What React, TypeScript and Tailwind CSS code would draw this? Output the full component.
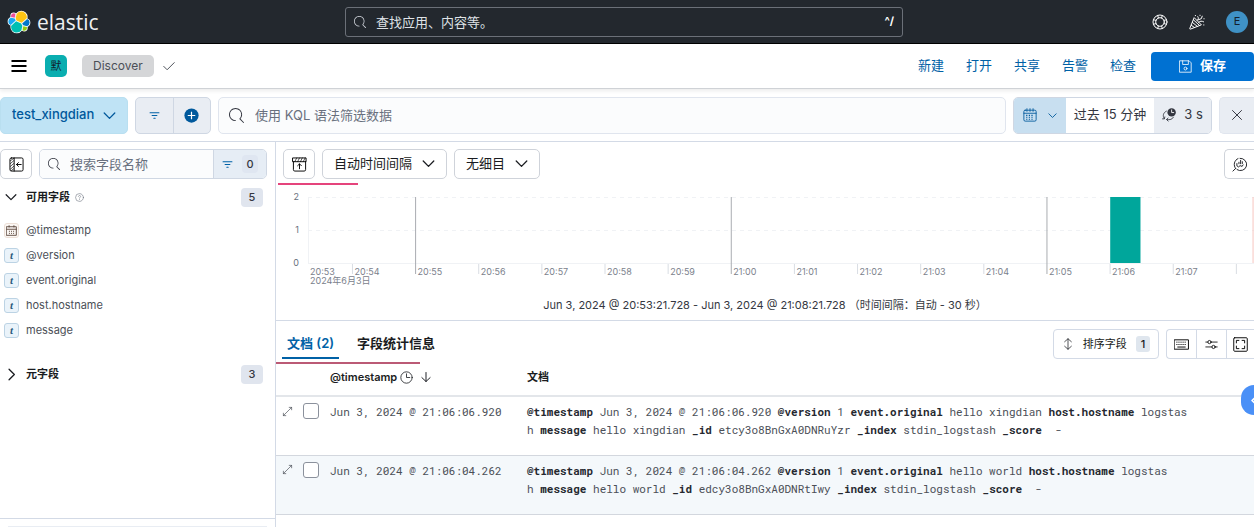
import { useState } from "react";
import type { ReactNode } from "react";

const FONT = "font-['Inter','Noto_Sans_CJK_SC',sans-serif]";

type IconProps = { className?: string; children?: ReactNode };

function Icon({ className = "size-4", children }: IconProps) {
  return (
    <svg
      viewBox="0 0 16 16"
      className={`shrink-0 ${className}`}
      fill="none"
      stroke="currentColor"
      strokeWidth={1}
      strokeLinecap="round"
      strokeLinejoin="round"
      aria-hidden="true"
    >
      {children}
    </svg>
  );
}

function SearchIcon({ className }: IconProps) {
  return (
    <Icon className={className}>
      <path
        fill="currentColor"
        stroke="none"
        d="M11.271 11.978l3.872 3.873a.502.502 0 0 0 .708 0 .502.502 0 0 0 0-.708l-3.565-3.564c2.38-2.747 2.267-6.923-.342-9.532-2.73-2.73-7.17-2.73-9.898 0-2.728 2.729-2.728 7.17 0 9.9a6.955 6.955 0 0 0 4.949 2.05.5.5 0 0 0 0-1 5.96 5.96 0 0 1-4.242-1.757 6.01 6.01 0 0 1 0-8.486 6.004 6.004 0 0 1 8.484 0 6.01 6.01 0 0 1 0 8.486.5.5 0 0 0 .034.738Z"
      />
    </Icon>
  );
}

function ChevronDown({ className }: IconProps) {
  return <Icon className={className}><path strokeWidth={1.6} d="M1.5 5L8 11.5 14.5 5" /></Icon>;
}

function FilterIcon({ className }: IconProps) {
  return <Icon className={className}><path strokeWidth={1.5} d="M1.5 4h13M4.5 8h7M7 12h2" /></Icon>;
}

function CalendarIcon({ className }: IconProps) {
  return (
    <Icon className={className}>
      <rect x="1" y="2.5" width="14" height="12.5" rx="1.5" />
      <path d="M1 6h14M4.5 0.8v3M8 0.8v3M11.5 0.8v3" />
      <path strokeDasharray="1.4 1.6" strokeLinecap="butt" strokeWidth={1.2} d="M3.6 8.4h9M3.6 10.6h9M3.6 12.8h9" />
    </Icon>
  );
}

function ElasticMark() {
  const parts = [
    ["#FEC514", "M12.58 13.787l7.002 3.211 7.066-6.213a7.849 7.849 0 0 0 .152-1.557c0-4.287-3.464-7.762-7.738-7.762a7.714 7.714 0 0 0-6.38 3.37l-1.176 6.126 1.074 2.825Z"],
    ["#00BFB3", "M5.333 21.228A8 8 0 0 0 5.18 22.805c0 4.299 3.484 7.796 7.767 7.796a7.761 7.761 0 0 0 6.418-3.406l1.166-6.104-1.556-2.99-7.03-3.216-6.612 6.343Z"],
    ["#F04E98", "M5.288 9.067l4.8 1.137 1.051-5.477a3.76 3.76 0 0 0-2.286-.77c-2.09 0-3.79 1.706-3.79 3.804 0 .447.078.892.225 1.306Z"],
    ["#1BA9F5", "M4.872 10.214a5.294 5.294 0 0 0-3.484 4.993c0 2.15 1.325 4.075 3.316 4.843l6.735-6.113-1.237-2.653-5.33-1.07Z"],
    ["#93C90E", "M20.873 27.187c.652.5 1.457.782 2.278.782 2.09 0 3.79-1.706 3.79-3.804 0-.46-.08-.906-.228-1.317l-4.796-1.126-1.044 5.465Z"],
    ["#0077CC", "M21.848 20.563l5.28 1.24a5.304 5.304 0 0 0 3.484-4.997 5.289 5.289 0 0 0-3.324-4.843l-6.905 6.071 1.465 2.529Z"],
  ];
  return (
    <svg viewBox="-0.5 -0.5 33 33" className="size-6 shrink-0" aria-hidden="true">
      {parts.map(([fill, d]) => (
        <path key={fill} d={d} fill="#fff" stroke="#fff" strokeWidth={2} />
      ))}
      {parts.map(([fill, d]) => <path key={fill} d={d} fill={fill} />)}
    </svg>
  );
}

function Header() {
  return (
    <header className="grid h-11 grid-cols-[345px_1fr_351px] items-center border-b border-black bg-[#23282e] text-white">
      <a href="#" className="flex items-center gap-[6px] pl-[7px]">
        <ElasticMark />
        <span className="font-['Open_Sans',sans-serif] text-[21px] leading-6 text-[#eef0f2]">elastic</span>
      </a>
      <div className="flex h-[30px] items-center gap-[10px] rounded-[3px] border border-[#6b7078] px-2">
        <label htmlFor="global-search">
          <SearchIcon className="size-3 text-gray-300" />
        </label>
        <input
          id="global-search"
          type="search"
          aria-label="搜索"
          placeholder="查找应用、内容等。"
          className="h-6 min-w-0 flex-1 bg-transparent text-[13px] leading-6 text-gray-100 outline-none placeholder:text-[#dfe2e6]"
        />
        <kbd className="font-['Inter',sans-serif] text-[11px] font-bold">^/</kbd>
      </div>
      <div className="flex items-center justify-end gap-[21px] pr-[6px]">
        <button type="button" aria-label="帮助">
          <Icon className="size-4">
            <circle cx="8" cy="8" r="7" />
            <circle cx="8" cy="8" r="4.3" />
            <path d="M5.7 1.5l.7 2.6M10.3 1.5l-.7 2.6M5.7 14.5l.7-2.6M10.3 14.5l-.7-2.6M1.5 5.7l2.6.7M1.5 10.3l2.6-.7M14.5 5.7l-2.6.7M14.5 10.3l-2.6-.7" />
          </Icon>
        </button>
        <button type="button" aria-label="新闻">
          <Icon className="size-4">
            <path d="M5 4L0.8 14.4c-.2.6.2.9.7.7L12 11zM3.4 8.4l5 4M4.4 5.8l6 5.6M2.2 11.2l3.4 2.4M8 6.6c1.6-1 1.8-2.6.8-4M9.6 8.4c1.6-1.6 3-1.6 5-.6M9.4 5.8l3-1.2.8-2.4M11 1.2v.3M15 4.6v.3M6.4 1.4v.3M14.8 10.8v.3" />
          </Icon>
        </button>
        <button type="button" className="size-[22px] rounded-full bg-[#3f91c5] text-[11px] text-[#12202c]">E</button>
      </div>
    </header>
  );
}

function NavBar() {
  return (
    <nav className="relative z-10 flex h-[45px] items-center border-b border-[#cfd2d6] bg-white shadow-[0_2px_4px_rgba(0,0,0,0.08)]">
      <button type="button" aria-label="菜单" className="ml-[11px] mr-[18px]">
        <Icon className="size-4 text-black"><path strokeLinecap="butt" strokeWidth={1.8} d="M0.5 3h15M0.5 8h15M0.5 13h15" /></Icon>
      </button>
      <button type="button" className="size-[22px] rounded-[5px] bg-[#0aaeb0] text-[11px] text-[#12202c]">默</button>
      <a href="#" className="ml-[15px] flex h-[22px] items-center rounded-[5px] bg-[#d5d6d8] px-[11px] text-[12px] text-[#4b4f57]">Discover</a>
      <Icon className="ml-[9px] size-3 text-[#4b4f57]"><path strokeWidth={1.3} d="M1 8.5l4.5 4.5L15 3.5" /></Icon>
      <div className="ml-auto flex items-center gap-[22px] text-[13px] text-[#0061a6]">
        {["新建", "打开", "共享", "告警", "检查"].map((label) => (
          <button key={label} type="button">{label}</button>
        ))}
      </div>
      <button
        type="button"
        className="ml-[15px] flex h-[29px] w-[103px] items-center justify-center gap-2 rounded bg-[#0071d2] text-[13px] font-semibold text-white"
      >
        <Icon className="size-[13px]">
          <path d="M1 1h11.5L15 3.5V15H1zM4.5 1v4.5h7V1" />
          <circle cx="8" cy="10.5" r="1.8" />
        </Icon>
        保存
      </button>
    </nav>
  );
}

function QueryBar() {
  return (
    <div className="flex h-[53px] items-center gap-[7px] border-b border-[#d3dae6]">
      <div className="relative h-[37px] w-32 text-[#00599c]">
        <select
          aria-label="数据视图"
          className="h-full w-full appearance-none rounded-[5px] border border-[#b9dff0] bg-[#bfe3f5] pl-[11px] text-[13px] font-medium"
        >
          <option>test_xingdian</option>
        </select>
        <ChevronDown className="pointer-events-none absolute right-3 top-3 size-[13px]" />
      </div>
      <div className="flex h-[37px] w-[76px] divide-x divide-[#cfd7e3] overflow-hidden rounded-[5px] border border-[#cfd7e3] bg-[#e9edf3] text-[#0061a6]">
        <button type="button" aria-label="筛选" className="flex flex-1 items-center justify-center">
          <FilterIcon className="size-[11px]" />
        </button>
        <button type="button" aria-label="添加筛选" className="flex flex-1 items-center justify-center">
          <svg viewBox="0 0 16 16" className="size-[15px]" aria-hidden="true">
            <circle cx="8" cy="8" r="7.6" fill="#00599c" />
            <path d="M8 4v8M4 8h8" stroke="#fff" strokeWidth={1.3} />
          </svg>
        </button>
      </div>
      <div className="flex h-[37px] min-w-0 flex-1 items-center gap-[11px] rounded-[5px] border border-[#e0e5ee] bg-[#fbfcfd] px-[10px]">
        <label htmlFor="kql">
          <SearchIcon className="size-[15px] text-[#343741]" />
        </label>
        <input
          id="kql"
          type="search"
          aria-label="查询"
          placeholder="使用 KQL 语法筛选数据"
          className="h-6 min-w-0 flex-1 bg-transparent text-[13px] leading-6 outline-none placeholder:text-[#69707d]"
        />
      </div>
      <div className="flex h-[37px] w-[199px] overflow-hidden rounded-[5px] border border-[#cfd7e3] text-[13px] text-[#343741]">
        <button type="button" aria-label="日期" className="flex w-[52px] items-center justify-center gap-[11px] bg-[#c8dff0] text-[#00599c]">
          <CalendarIcon className="size-[14px]" />
          <ChevronDown className="size-[9px]" />
        </button>
        <button type="button" className="flex-1 whitespace-nowrap bg-white">过去 15 分钟</button>
        <button type="button" className="flex w-[57px] items-center justify-center gap-2 bg-[#e9edf3]">
          <Icon className="size-[14px]">
            <circle cx="11" cy="5" r="4.8" fill="currentColor" stroke="none" />
            <path stroke="#fff" d="M11 2.2V5.2h2.4" />
            <path d="M5 3.6C1.4 5.2.4 9 2.6 12.2M.6 12.4h2.2l.4-2.2M5.4 13.2c3.6.8 6.6-.4 7.6-2.6M7 11.4l-1.8 1.8L7 15" />
          </Icon>
          3 s
        </button>
      </div>
      <button type="button" aria-label="关闭" className="flex h-[37px] w-[35px] items-center justify-center rounded-l-[5px] border border-r-0 border-[#e0e5ee] bg-[#e9edf3]">
        <Icon className="size-3 text-[#343741]"><path strokeWidth={1.3} d="M2 2l12 12M14 2L2 14" /></Icon>
      </button>
    </div>
  );
}

function CountBadge({ children }: IconProps) {
  return (
    <span className="ml-auto flex h-[19px] w-[22px] items-center justify-center rounded bg-[#e0e5ee] text-[11px] font-medium text-[#343741]">
      {children}
    </span>
  );
}

const fields = ["@timestamp", "@version", "event.original", "host.hostname", "message"];

function Sidebar() {
  return (
    <aside className="flex w-[276px] shrink-0 flex-col border-r border-[#d3dae6]">
      <div className="flex gap-[7px] pr-2 pt-[7px]">
        <button type="button" aria-label="隐藏边栏" className="flex h-[30px] w-8 items-center justify-center rounded-[5px] border border-[#cfd3da]">
          <Icon className="size-[15px] text-black">
            <rect x="1" y="1" width="14" height="14" rx="1.5" />
            <path d="M5.5 1v14M13 8H8M10 6L8 8l2 2" />
            <path strokeWidth={0.7} d="M1.5 4l3.5-2.5M1.5 7l3.5-3M1.5 10l3.5-3M1.5 13l3.5-3M2.5 14.5l2.5-2" />
          </Icon>
        </button>
        <div className="flex h-[30px] min-w-0 flex-1 overflow-hidden rounded-[5px] border border-[#cfd7e3]">
          <div className="flex min-w-0 flex-1 items-center gap-[10px] bg-[#fbfcfd] pl-2">
            <label htmlFor="field-search">
              <SearchIcon className="size-3 text-[#343741]" />
            </label>
            <input
              id="field-search"
              type="search"
              aria-label="搜索字段"
              placeholder="搜索字段名称"
              className="h-6 w-full min-w-0 bg-transparent text-[13px] leading-6 outline-none placeholder:text-[#69707d]"
            />
          </div>
          <button type="button" className="flex w-[53px] items-center justify-center gap-[9px] border-l border-[#cfd7e3] bg-[#e6edf5] text-[11px] font-medium text-[#343741]">
            <FilterIcon className="size-[11px] text-[#0061a6]" />
            <span className="rounded bg-[#dfe6f1] px-1 py-px">0</span>
          </button>
        </div>
      </div>

      <div className="mt-2 flex h-5 items-center pl-[5px] pr-3">
        <ChevronDown className="size-3 text-[#1a1c21]" />
        <h2 className="ml-[9px] text-[11px] font-semibold text-[#1a1c21]">可用字段</h2>
        <Icon className="ml-[5px] size-[9px] text-[#69707d]">
          <circle cx="8" cy="8" r="7" />
          <path d="M6 6.2c0-2.6 4-2.6 4 0 0 1.4-2 1.4-2 3M8 11.6v.3" />
        </Icon>
        <CountBadge>5</CountBadge>
      </div>

      <ul className="mt-[11px] text-[11px] text-[#4b4f57]">
        {fields.map((field) => (
          <li key={field} className="flex h-[25px] items-center gap-[7px] pl-1">
            {field === "@timestamp" ? (
              <span className="flex size-[15px] items-center justify-center rounded-[3px] border border-[#ecdfd6] bg-[#fbf7f4]">
                <Icon className="size-[11px] text-[#5a463c]">
                  <path strokeWidth={1.3} d="M1 2.5h14V15H1zM1 6.2h14M4.5 1v2M11.5 1v2M5 9v.4M8 9v.4M11 9v.4M5 12v.4M8 12v.4M11 12v.4" />
                </Icon>
              </span>
            ) : (
              <span className="flex size-[15px] items-center justify-center rounded-[3px] border border-[#bcd3e4] bg-[#eaf3fa] font-['Liberation_Serif',serif] text-[11px] font-bold italic leading-none text-[#2c5a7d]">t</span>
            )}
            {field}
          </li>
        ))}
      </ul>

      <div className="mt-[21px] flex h-5 items-center pl-[5px] pr-3">
        <Icon className="size-[13px] text-[#1a1c21]"><path strokeWidth={1.6} d="M5 1.5L11.5 8 5 14.5" /></Icon>
        <h2 className="ml-2 text-[11px] font-semibold text-[#1a1c21]">元字段</h2>
        <CountBadge>3</CountBadge>
      </div>

      <div className="mt-auto h-[9px] border-t border-[#d3dae6] px-2 pt-[7px]">
        <div className="border-t border-[#e9edf3]" />
      </div>
    </aside>
  );
}

// position of each minute tick, as a share of the plot width
const FIRST_TICK = 4.7;
const TICK_STEP = 6.674;
const ticks = ["20:54", "20:55", "20:56", "20:57", "20:58", "20:59", "21:00", "21:01", "21:02", "21:03", "21:04", "21:05", "21:06", "21:07", ""];

function Histogram() {
  return (
    <div className="mt-3 flex">
      <div className="flex h-[77px] w-8 flex-col justify-between pr-[9px] text-right text-[9px] leading-[11px] text-[#69707d]">
        <span>2</span>
        <span>1</span>
        <span>0</span>
      </div>
      <svg className="mt-[6px] h-[92px] min-w-0 flex-1" role="img" aria-label="直方图">
        <g stroke="#f0f2f5">
          <path d="M0.5 0V67" />
          <line x1="0" x2="100%" y1="0.5" y2="0.5" strokeDasharray="4 4" />
          <line x1="0" x2="100%" y1="33.5" y2="33.5" strokeDasharray="4 4" />
          <line x1="0" x2="100%" y1="66.5" y2="66.5" />
        </g>
        <rect x="84.8%" y="0" width="3.2%" height="66" fill="#00a69b" />
        <line x1="99.9%" x2="99.9%" y1="0" y2="66" stroke="#f7c5bf" />
        <g fontSize="9" fill="#7b818c">
          <text x="2" y="78">20:53</text>
          <text x="2" y="87">2024年6月3日</text>
        </g>
        {ticks.map((label, i) => {
          const major = /[05]$/.test(label);
          return (
            <svg key={i} x={`${FIRST_TICK + i * TICK_STEP}%`} overflow="visible">
              <line x1="0" x2="0" y1={major ? 0 : 67} y2="77" stroke={major ? "#a9acb1" : "#d9dde3"} />
              <text x="2" y="78" fontSize="9" fill="#7b818c">{label}</text>
            </svg>
          );
        })}
      </svg>
    </div>
  );
}

function ChartPanel() {
  return (
    <section className="relative h-[179px] border-b border-[#d3dae6] pt-[7px]">
      <div className="flex gap-[7px] pl-[7px] text-[13px] text-[#1a1c21]">
        <button type="button" aria-label="隐藏图表" className="flex h-[30px] w-8 items-center justify-center rounded-[5px] border border-[#cfd3da]">
          <Icon className="size-[15px] text-black">
            <path d="M1 1h14v4H1zM1.5 5v8.5A1.5 1.5 0 0 0 3 15h10a1.5 1.5 0 0 0 1.5-1.5V5M8 12.5v-5M6 9.3l2-2 2 2" />
            <path strokeWidth={0.7} d="M3 5l2-4M6 5l2-4M9 5l2-4M12 5l2-4" />
          </Icon>
        </button>
        <div className="relative h-[30px] w-[125px]">
          <select aria-label="时间间隔" className="h-full w-full appearance-none rounded-[5px] border border-[#cfd3da] pl-[11px]">
            <option>自动时间间隔</option>
          </select>
          <ChevronDown className="pointer-events-none absolute right-3 top-2 size-[13px]" />
        </div>
        <div className="relative h-[30px] w-[86px]">
          <select aria-label="细目" className="h-full w-full appearance-none rounded-[5px] border border-[#cfd3da] pl-[11px]">
            <option>无细目</option>
          </select>
          <ChevronDown className="pointer-events-none absolute right-3 top-2 size-[13px]" />
        </div>
        <button type="button" aria-label="编辑可视化" className="ml-auto flex h-[30px] w-[30px] items-center justify-center rounded-l-[5px] border border-r-0 border-[#cfd3da]">
          <Icon className="size-[15px] text-[#1a1c21]">
            <path d="M3.9 12.2A6.6 6.6 0 0 1 6.4 1.7M8.6 1.4a6.6 6.6 0 1 1-3.2 12.1M1 15l2.9-2.8M5.2 7v2.4l1.8 1.2 1.6-1.4 2.2.8 1-1.6M7.4 7.2V5.6M9.2 7.2V3.6M11 7V5" />
          </Icon>
        </button>
      </div>
      <div className="absolute left-[2px] top-[41px] h-[2px] w-20 bg-[#e5447c]" />
      <Histogram />
      <p className="mt-2 text-center text-[11px] leading-4 text-[#343741]">
        Jun 3, 2024 @ 20:53:21.728 - Jun 3, 2024 @ 21:08:21.728 （时间间隔：自动 - 30 秒）
      </p>
    </section>
  );
}

type Pair = [string, string];
type Doc = { time: string; lines: Pair[][] };

const docs: Doc[] = [
  {
    time: "Jun 3, 2024 @ 21:06:06.920",
    lines: [
      [["@timestamp", "Jun 3, 2024 @ 21:06:06.920 "], ["@version", "1 "], ["event.original", "hello xingdian "], ["host.hostname", "logstas"]],
      [["", "h "], ["message", "hello xingdian "], ["_id", "etcy3o8BnGxA0DNRuYzr "], ["_index", "stdin_logstash "], ["_score", " -"]],
    ],
  },
  {
    time: "Jun 3, 2024 @ 21:06:04.262",
    lines: [
      [["@timestamp", "Jun 3, 2024 @ 21:06:04.262 "], ["@version", "1 "], ["event.original", "hello world "], ["host.hostname", "logstas"]],
      [["", "h "], ["message", "hello world "], ["_id", "edcy3o8BnGxA0DNRtIwy "], ["_index", "stdin_logstash "], ["_score", " -"]],
    ],
  },
];

function DocTable() {
  const [selected, setSelected] = useState<string[]>([]);

  function toggle(time: string) {
    setSelected((prev) => (prev.includes(time) ? prev.filter((t) => t !== time) : [...prev, time]));
  }

  return (
    <table className="w-full table-fixed border-collapse text-left text-[11px]">
      <thead>
        <tr className="h-[30px] border-b-2 border-[#e3e6ea] align-top text-[#1a1c21]">
          <th className="w-[54px]" aria-label="操作" />
          <th className="w-[197px] p-0 pt-[3px] font-semibold">
            <span className="flex items-center gap-[3px]">
              @timestamp
              <Icon className="size-[13px]"><circle cx="8" cy="8" r="7" /><path d="M8 3.5V8h4" /></Icon>
              <Icon className="ml-1 size-3"><path strokeWidth={1.3} d="M8 2v12M2.5 8.8L8 14l5.5-5.2" /></Icon>
            </span>
          </th>
          <th className="p-0 pt-[3px] font-semibold">文档</th>
        </tr>
      </thead>
      <tbody className="font-['Roboto_Mono','Liberation_Mono',monospace] leading-[18px] text-[#4b4f57]">
        {docs.map((doc) => (
          <tr key={doc.time} className="h-[59px] border-b border-[#d3d7de] align-top even:bg-[#f4f8fb]">
            <td className="p-0 pt-[6px]">
              <div className="flex items-center gap-[10px] pl-[6px]">
                <button type="button" aria-label="展开">
                  <Icon className="size-[11px]"><path d="M2 14L14 2M10.5 2H14v3.5M5.5 14H2v-3.5" /></Icon>
                </button>
                <input
                  type="checkbox"
                  aria-label={`选择 ${doc.time}`}
                  checked={selected.includes(doc.time)}
                  onChange={() => toggle(doc.time)}
                  className="size-4 appearance-none rounded-[3px] border border-[#8b919c] bg-white checked:bg-[#0071d2]"
                />
              </div>
            </td>
            <td className="p-0 pt-[6px]">{doc.time}</td>
            <td className="p-0 pt-[6px]">
              {doc.lines.map((line, i) => (
                <div key={i} className="whitespace-pre">
                  {line.map(([name, value]) => (
                    <span key={name}>
                      {name && <b className="font-bold text-[#25282f]">{name} </b>}
                      {value}
                    </span>
                  ))}
                </div>
              ))}
            </td>
          </tr>
        ))}
      </tbody>
    </table>
  );
}

function DocsPanel() {
  return (
    <section className="relative">
      <div className="flex h-[45px] items-start pl-[6px] pt-2">
        <div role="tablist" className="flex h-[30px] gap-[13px] text-[13px] font-semibold">
          <button type="button" role="tab" aria-selected="true" className="border-b-2 border-[#0061a6] px-[5px] pt-px text-[#0061a6]">文档 (2)</button>
          <button type="button" role="tab" aria-selected="false" className="border-b-2 border-transparent px-[5px] pt-px text-[#1a1c21]">字段统计信息</button>
        </div>
        <button type="button" className="ml-auto flex h-[30px] w-[106px] items-center justify-center gap-[9px] rounded border border-[#d3dae6] text-[11px] text-[#1a1c21]">
          <Icon className="size-3"><path d="M8 1v14M3.5 5L8 1l4.5 4M3.5 11L8 15l4.5-4" /></Icon>
          排序字段
          <span className="rounded-[3px] bg-[#dfe6ee] px-[5px] leading-4 font-medium">1</span>
        </button>
        <div className="ml-[7px] flex h-[30px] w-[88px] divide-x divide-[#d3dae6] rounded-l border border-r-0 border-[#d3dae6] text-black">
          <button type="button" aria-label="键盘快捷方式" className="flex w-[30px] items-center justify-center">
            <Icon className="size-[15px]">
              <rect x="0.6" y="3" width="14.8" height="10" />
              <path strokeDasharray="1.2 1" strokeLinecap="butt" d="M2.5 5.5h11M2.5 8h11" />
              <path d="M4 10.7h8" />
            </Icon>
          </button>
          <button type="button" aria-label="显示选项" className="flex w-[30px] items-center justify-center">
            <Icon className="size-[13px]">
              <path d="M1 5h2.5M7.5 5H15M1 11h7.5M12.5 11H15" />
              <circle cx="5.5" cy="5" r="2" />
              <circle cx="10.5" cy="11" r="2" />
            </Icon>
          </button>
          <button type="button" aria-label="全屏" className="flex flex-1 items-center justify-center">
            <Icon className="size-[15px]">
              <rect x="0.8" y="0.8" width="14.4" height="14.4" rx="1" />
              <path d="M3.6 6.3V3.6h2.7M9.7 3.6h2.7v2.7M12.4 9.7v2.7H9.7M6.3 12.4H3.6V9.7" />
            </Icon>
          </button>
        </div>
      </div>
      <div className="absolute left-0 top-[41px] h-[2px] w-36 bg-[#bb5a75]" />
      <DocTable />
      <button type="button" aria-label="展开面板" className="absolute right-0 top-16 h-[30px] w-[13px] overflow-hidden rounded-l-full bg-[#4a90f7] text-white">
        <Icon className="ml-[9px] size-[11px]"><path strokeWidth={2.4} d="M8 3L3 8l5 5" /></Icon>
      </button>
    </section>
  );
}

export default function App() {
  return (
    <div className={`flex min-h-screen flex-col bg-white text-[#343741] ${FONT}`}>
      <Header />
      <NavBar />
      <QueryBar />
      <div className="flex flex-1">
        <Sidebar />
        <main className="min-w-0 flex-1 overflow-hidden">
          <ChartPanel />
          <DocsPanel />
        </main>
      </div>
    </div>
  );
}
